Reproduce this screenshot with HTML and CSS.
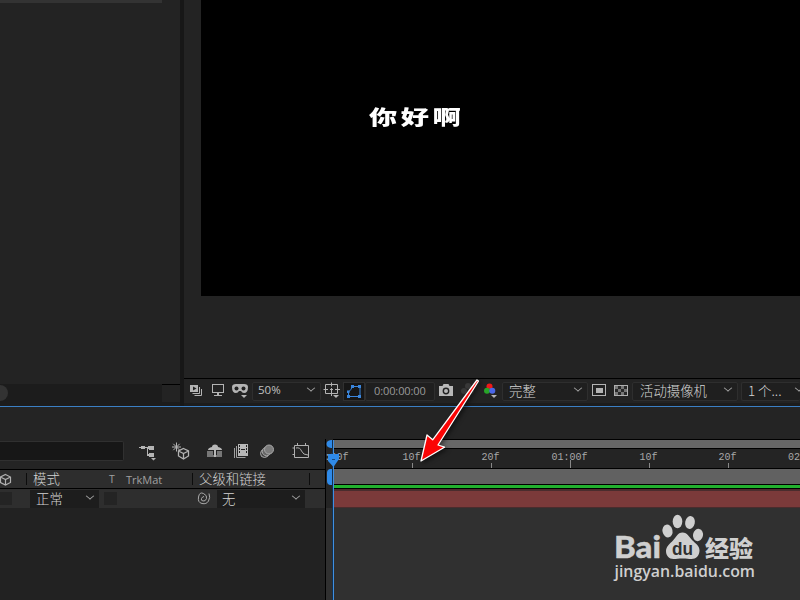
FILE: index.html
```html
<!DOCTYPE html>
<html lang="zh-CN">
<head>
    <meta charset="UTF-8">
    <title>合成 1</title>
    <link rel="stylesheet" href="styles.css">
</head>
<body>
    <div class="workspace">
        <div class="project">
            <div class="project-head"></div>
            <div class="project-foot">
                <div class="scroll"><div class="thumb"></div></div>
                <div class="corner"></div>
            </div>
        </div>
        <div class="viewer">
            <div class="stage">
                <div class="comp"><span class="comp-text">你好啊</span></div>
            </div>
            <div class="toolbar">
                <svg class="tools" width="68" height="24" viewBox="184 379 68 24">
                    <g fill="#b4b4b4">
                        <rect x="190" y="385" width="8" height="7"/>
                        <path d="M199.500 387v6.500h-7M201.500 389v6.500h-7" fill="none" stroke="#b4b4b4"/>
                        <path d="M193 386.500l3.500 2-3.500 2z" fill="#222"/>
                        <rect x="212.500" y="384.500" width="11" height="8" fill="none" stroke="#b4b4b4"/>
                        <path d="M217 393h2v2h3v1h-8v-1h3z"/>
                        <path d="M232 387q0-3 4-3h8q4 0 4 3 0 6-4 6-2 0-3-2h-2q-1 2-3 2-4 0-4-6z"/>
                        <circle cx="236.500" cy="388.500" r="2" fill="#222"/>
                        <circle cx="243.500" cy="388.500" r="2" fill="#222"/>
                        <path d="M241 395h6l-3 3z"/>
                    </g>
                </svg>
                <div class="select zoom-select"><span>50%</span><i class="chevron"></i></div>
                <svg class="tools" width="22" height="24" viewBox="321 379 22 24">
                    <path d="M325.500 384.500h12v9h-12zM331.500 382.500v4m0 4.500v5M323.500 389.500h4.500m7 0h5M330 389.500h3m-1.500-1.500v3" fill="none" stroke="#b4b4b4"/>
                    <path d="M333 395h6l-3 3z" fill="#b4b4b4"/>
                </svg>
                <div class="mask-toggle">
                    <svg width="20" height="18" viewBox="344 382 20 18">
                        <path d="M348.500 395.500v-4.500q2.500-2 4-5.500h7.500v10z" fill="none" stroke="#3a86dd"/>
                        <path d="M347 394h3v3h-3zM351 384h3v3h-3zM358 384h3v3h-3zM358 394h3v3h-3zM347 389.500h2.500v2.500h-2.500z" fill="#3a86dd"/>
                    </svg>
                </div>
                <div class="select timecode"><span>0:00:00:00</span></div>
                <svg class="tools" width="67" height="24" viewBox="435 379 67 24">
                    <path d="M439 386h3.500l1-2h5l1 2h3.500v10h-14z" fill="#b8b8b8"/>
                    <circle cx="446" cy="391" r="2.700" fill="none" stroke="#222" stroke-width="1.400"/>
                    <g fill="#383838">
                        <circle cx="468" cy="386" r="3"/>
                        <circle cx="464" cy="391" r="3"/>
                        <circle cx="471" cy="391" r="3"/>
                    </g>
                    <circle cx="489.500" cy="386.500" r="3" fill="#f01818"/>
                    <circle cx="487" cy="390.700" r="3" fill="#28a528"/>
                    <circle cx="492.300" cy="390.700" r="3" fill="#4a66e8"/>
                    <path d="M491 395h6l-3 3z" fill="#b4b4b4"/>
                </svg>
                <div class="select res-select"><span class="cjk">完整</span><i class="chevron"></i></div>
                <svg class="tools" width="44" height="24" viewBox="588 379 44 24">
                    <rect x="592.500" y="384.500" width="13" height="11" fill="none" stroke="#b4b4b4"/>
                    <rect x="596" y="388" width="7" height="5" fill="#b4b4b4"/>
                    <rect x="614.500" y="385.500" width="13" height="10" fill="#292929" stroke="#b0b0b0"/>
                    <path d="M615 386h3v3h-3zm6 0h3v3h-3zm-3 3h3v3h-3zm6 0h3v3h-3zm-9 3h3v3h-3zm6 0h3v3h-3z" fill="#777"/>
                </svg>
                <div class="select cam-select"><span class="cjk">活动摄像机</span><i class="chevron"></i></div>
                <div class="select view-select"><span class="cjk">1 个...</span><i class="chevron"></i></div>
            </div>
        </div>
    </div>

    <div class="timeline">
        <div class="layers">
            <div class="layer-tools">
                <div class="search"></div>
                <svg width="180" height="24" viewBox="136 439 180 24">
                    <path d="M139 447h2v-1h4v1h3v-1h6v4h-5v-1h-1v5h1v-1h5v4h-5v-1h-2v-8h-2v1h-4v-1h-2zM151 458h5l-2.500 2.500z" fill="#b4b4b4"/>
                    <g fill="none" stroke="#b4b4b4">
                        <path d="M176.500 442.500v9M172 447h9M173.300 443.800l6.400 6.400M179.700 443.800l-6.400 6.400"/>
                        <path d="M183.500 448.500l5 2.500v5l-5 3-5-3v-5zM178.500 451l5 2.500 5-2.500M183.500 453.500v5.500" stroke-width="1.300"/>
                    </g>
                    <path d="M207 451h15v6h-15z" fill="#777"/>
                    <path d="M208 450q0-2 4-3 0-2.500 3-2.500t3 2.500q4 1 4 3zM214 450h2v7h-2z" fill="#b8b8b8"/>
                    <path d="M213 451h1v4h-1zM216 451h1v4h-1z" fill="#222"/>
                    <path d="M238 444h10v12h-10z" fill="#b8b8b8"/>
                    <path d="M236.500 446v11.500h9M234.500 448v10" fill="none" stroke="#a0a0a0"/>
                    <path d="M239 445h1v2h-1zm0 3h1v2h-1zm0 3h1v2h-1zm7-6h1v2h-1zm0 3h1v2h-1zm0 3h1v2h-1zM241 449h4v1h-4z" fill="#222"/>
                    <g stroke="#a8a8a8">
                        <circle cx="264.500" cy="453.500" r="4" fill="#444"/>
                        <circle cx="266.500" cy="451.500" r="4.300" fill="#666"/>
                        <circle cx="269" cy="449.500" r="4.500" fill="#7c7c7c"/>
                    </g>
                    <path d="M294.500 445.500h14v12h-14zM296 448q4-1 5.500 3t6.500 4M297.500 443v3M305.500 443v3M292.500 448h2M292.500 454.500h2" fill="none" stroke="#b0b0b0"/>
                </svg>
            </div>
            <div class="columns">
                <svg class="cube" width="26" height="18" viewBox="0 470 26 18">
                    <path d="M5.500 474.500l5 2.500v5.500l-5 2.500-5-2.500v-5.500zM.500 477l5 2.500 5-2.500M5.500 479.500v5.500" fill="none" stroke="#b0b0b0" stroke-width="1.200"/>
                </svg>
                <div class="col col-mode cjk">模式</div>
                <div class="col col-t">T</div>
                <div class="col col-trk">TrkMat</div>
                <div class="col col-parent cjk">父级和链接</div>
                <div class="col-end"></div>
            </div>
            <div class="layer-row">
                <div class="box box-3d"></div>
                <div class="drop drop-mode"><span class="cjk">正常</span><i class="chevron"></i></div>
                <div class="box box-t"></div>
                <svg class="whip" width="14" height="14" viewBox="0 0 14 14">
                    <path d="M12 1.500q1.500 4-.5 7.500T5 11.500 1.500 5 6.500 1.500t3 5T6 9 4.500 6.500 7 4.500" fill="none" stroke="#aaa"/>
                </svg>
                <div class="drop drop-parent"><span class="cjk">无</span><i class="chevron"></i></div>
            </div>
        </div>
        <div class="track">
            <div class="navigator"></div>
            <div class="ruler">
                <div class="mark">:00f</div>
                <div class="mark">10f</div>
                <div class="mark">20f</div>
                <div class="mark second">01:00f</div>
                <div class="mark">10f</div>
                <div class="mark">20f</div>
                <div class="mark last">02</div>
            </div>
            <div class="work-area"></div>
            <div class="cache"></div>
            <div class="layer-bar"></div>
            <svg class="playhead" width="14" height="162" viewBox="326 438 14 162">
                <path d="M333 440v8h-2q-4.500-.5-4.500-4t4.500-4zM332 469v16h-2q-3-.5-3-4v-8q0-3.500 3-4z" fill="#2f8ae8"/>
                <rect x="332" y="440" width="1" height="160" fill="#14304f"/>
                <rect x="333" y="440" width="1" height="160" fill="#3f8fe0"/>
                <path d="M328 454h11v5l-5.500 8-5.500-6z" fill="#2f8ae8"/>
                <path d="M332 459.500h3" stroke="#174a80"/>
            </svg>
        </div>
    </div>

    <svg class="arrow" width="70" height="92" viewBox="415 375 70 92">
        <path d="M421 461l6-26 5.700 4.800L477 380l1.500 1-40.500 64 6.500 2.200z" fill="#fb0505" stroke="#fff" stroke-width="1.300" stroke-linejoin="round"/>
    </svg>

    <svg class="watermark" width="150" height="75" viewBox="610 510 150 75">
        <g fill="#cfcfcf">
            <text class="wm-logo" x="614" y="558" textLength="47" lengthAdjust="spacingAndGlyphs">Bai</text>
            <ellipse cx="667.500" cy="531" rx="5" ry="6.500" transform="rotate(-12 667.500 531)"/>
            <ellipse cx="677.500" cy="521.500" rx="4.800" ry="6.700"/>
            <ellipse cx="690" cy="522.500" rx="4.800" ry="6.500" transform="rotate(12 690 522.500)"/>
            <ellipse cx="698" cy="535" rx="5" ry="6.200" transform="rotate(12 698 535)"/>
            <path d="M682.500 532.500c5 0 7 5 10 8s7 5 7 10-3.500 8.500-8 8.500c-3 0-5-.5-9-.5s-6 .5-9 .5c-4.500 0-7.500-3.500-7.500-8s4-7.500 7-10.500 4.500-8 9.500-8z"/>
            <text class="wm-cjk" x="705" y="556.500" textLength="48" lengthAdjust="spacingAndGlyphs">经验</text>
            <text class="wm-url" x="614.500" y="577" textLength="140.500" lengthAdjust="spacingAndGlyphs">jingyan.baidu.com</text>
        </g>
        <text class="wm-du" x="672" y="555" textLength="21" lengthAdjust="spacingAndGlyphs">du</text>
    </svg>
</body>
</html>
```
FILE: styles.css
```css
* { box-sizing: border-box; }
body { margin: 0; width: 800px; height: 600px; overflow: hidden; position: relative; background: #232323; color: #b4b4b4; font: 11px "Open Sans", "Noto Sans CJK SC", sans-serif; }
svg { display: block; flex: none; }
.cjk { font-family: "Noto Sans CJK SC", sans-serif; font-size: 13.4px; line-height: 16px; font-weight: 300; color: #d4d4d4; }
.chevron { flex: none; width: 6px; height: 6px; border: solid #a8a8a8; border-width: 0 1px 1px 0; transform: translateY(-2px) scaleY(0.85) rotate(45deg); }

.workspace { display: flex; height: 406px; }
.project { width: 180px; display: flex; flex-direction: column; justify-content: space-between; }
.project-head { width: 162px; height: 3px; background: #333; }
.project-foot { display: flex; height: 22px; border-bottom: 4px solid #1c1c1c; }
.scroll { width: 162px; background: #1c1c1c; overflow: hidden; }
.thumb { width: 16px; height: 16px; margin: 1px 0 0 -8px; border-radius: 8px; background: #333; }
.corner { flex: 1; border-top: 1px solid #000; }

.viewer { flex: 1; min-width: 0; border-left: 4px solid #171717; display: flex; flex-direction: column; }
.stage { height: 378px; padding-left: 17px; }
.comp { height: 296px; background: #000; padding: 100px 0 0 168px; }
.comp-text { display: inline-block; font: 900 20px/34px "Noto Sans CJK SC", sans-serif; letter-spacing: 2.5px; color: #fff; transform: scaleX(1.41); transform-origin: 0 0; white-space: nowrap; }
.toolbar { display: flex; align-items: center; height: 28px; border-top: 1px solid #000; border-bottom: 3px solid #1c1c1c; overflow: hidden; }
.select { flex: none; display: flex; align-items: center; justify-content: space-between; height: 19px; padding: 0 6px 2px; background: #1f1f1f; border: 1px solid #2e2e2e; border-radius: 2px; white-space: nowrap; }
.zoom-select { width: 69px; padding-left: 5px; }
.zoom-select span { font-size: 11.5px; line-height: 16px; color: #c0c0c0; }
.mask-toggle { flex: none; width: 22px; height: 19px; background: #161616; border: 1px solid #303030; }
.timecode { width: 70px; padding-left: 8px; color: #9a9a9a; }
.timecode span { font-size: 11px; letter-spacing: -0.1px; }
.res-select { width: 86px; }
.cam-select { width: 106px; padding-left: 7px; margin-right: 3px; }
.view-select { width: 59px; padding: 0 0 2px 6px; border-right: 0; }
.view-select .chevron { margin-right: -2px; }

.timeline { display: flex; height: 194px; border-top: 1px solid #3b7fc4; }
.layers { width: 325px; background: #222; }
.layer-tools { display: flex; align-items: center; gap: 12px; height: 62px; padding-top: 26px; background: #242424; }
.search { width: 124px; height: 20px; background: #171717; border: 1px solid #303030; border-left: 0; border-radius: 0 2px 2px 0; }
.columns { display: flex; align-items: center; height: 20px; background: #2d2d2d; border: solid #000; border-width: 1px 0; }
.col { display: flex; align-items: center; height: 12px; white-space: nowrap; color: #a0a0a0; }
.col-mode { width: 83px; padding: 0 0 2px 6px; border-left: 1px solid #0c0c0c; }
.col-t { width: 17px; font-size: 10.5px; }
.col-trk { width: 66px; }
.col-parent { width: 117px; padding: 0 0 2px 6px; border-left: 1px solid #0c0c0c; }
.col.cjk { color: #d4d4d4; }
.col-end { width: 1px; height: 12px; background: #0c0c0c; }
.layer-row { display: flex; align-items: center; height: 19px; background: #2e2e2e; }
.box { height: 13px; background: #242424; }
.box-3d { width: 12px; margin-right: 18px; }
.box-t { width: 13px; margin: 0 80px 0 5px; }
.drop { display: flex; align-items: center; justify-content: space-between; height: 18px; padding: 0 6px 2px; background: #1d1d1d; }
.drop-mode { width: 69px; }
.whip { margin-right: 6px; }
.drop-parent { width: 88px; padding-left: 5px; }

.track { flex: 1; min-width: 0; position: relative; overflow: hidden; padding: 32px 0 0 8px; background: linear-gradient(#000, #000) 0 32px / 1px 100% no-repeat #242424; }
.navigator { height: 10px; background: #676767; border: solid #000; border-width: 1px 0; }
.ruler { display: flex; height: 19px; margin-left: -40px; }
.mark { position: relative; flex: none; width: 79px; text-align: center; font: 10px/17px "Liberation Mono", monospace; color: #a8a8a8; }
.mark::after { content: ""; position: absolute; left: 40px; bottom: 0; width: 1px; height: 5px; background: #888; }
.mark.second::after { height: 8px; }
.mark:first-child { padding-left: 8px; }
.mark.last { width: 33px; text-align: right; }
.mark.last::after { display: none; }
.work-area { height: 17px; background: #616161; border: solid #000; border-width: 1px 0; }
.cache { height: 4px; background: #22b02e; border-bottom: 1px solid #000; }
.layer-bar { height: 19px; background: #7b3a3a; border: solid #4a2c2d; border-width: 2px 0 1px; }
.track::after { content: ""; display: block; height: 100px; margin-left: -7px; background: #303030; }
.playhead { position: absolute; left: 1px; top: 31px; }

.arrow { position: absolute; left: 415px; top: 375px; filter: drop-shadow(2px 2px 2px rgba(0, 0, 0, 0.5)); }
.watermark { position: absolute; left: 610px; top: 510px; }
.wm-logo { font: 900 31px Lato, sans-serif; stroke: #cfcfcf; stroke-width: 0.4px; }
.wm-du { font: bold 19px "Liberation Sans", sans-serif; fill: #303030; }
.wm-cjk { font: 900 23px "Noto Sans CJK SC", sans-serif; }
.wm-url { font: 600 15.5px/1 "Open Sans", sans-serif; }
```
